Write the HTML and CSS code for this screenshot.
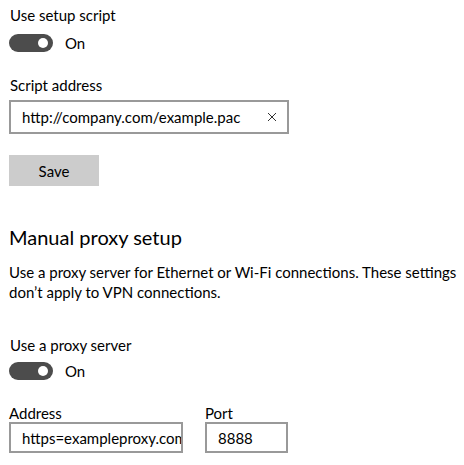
FILE: index.html
```html
<!DOCTYPE html>
<html lang="en">
<head>
<meta charset="UTF-8" />
<meta name="viewport" content="width=device-width, initial-scale=1" />
<title>Proxy</title>
<link rel="stylesheet" href="styles.css">
</head>
<body>

<div class="setting first">
  <div class="label">Use setup script</div>
  <div class="toggle-row">
    <span class="toggle on"><span class="knob"></span></span>
    <span class="state">On</span>
  </div>
</div>

<div class="setting">
  <div class="label">Script address</div>
  <div class="textbox script">
    <span class="value">http://company.com/example.pac</span>
    <svg class="clear" width="10" height="10" viewBox="0 0 10 10">
      <path d="M1 1 L9 9 M9 1 L1 9" stroke="#333" stroke-width="1" fill="none" />
    </svg>
  </div>
  <button class="btn">Save</button>
</div>

<h2>Manual proxy setup</h2>

<p class="desc">Use a proxy server for Ethernet or Wi-Fi connections. These settings don’t apply to VPN connections.</p>

<div class="setting">
  <div class="label">Use a proxy server</div>
  <div class="toggle-row second">
    <span class="toggle on"><span class="knob"></span></span>
    <span class="state">On</span>
  </div>
</div>

<div class="fields">
  <div class="field">
    <div class="field-label">Address</div>
    <div class="textbox address"><span class="value">https=exampleproxy.com</span></div>
  </div>
  <div class="field">
    <div class="field-label">Port</div>
    <div class="textbox port"><span class="value">8888</span></div>
  </div>
</div>

</body>
</html>
```

FILE: styles.css
```css
body {
  margin: 0;
  padding: 5px 9px 0;
  font-family: Lato, "Noto Sans", sans-serif;
  font-size: 15px;
  line-height: 20px;
  color: #000;
  background: #fff;
  overflow: hidden;
}
.label {
  padding-left: 1px;
}
.toggle-row {
  display: flex;
  align-items: center;
  height: 20px;
  margin-top: 8px;
}
.toggle-row.second {
  margin-top: 6px;
}
.toggle {
  width: 44px;
  height: 18px;
  border-radius: 9px;
  background: #4c4c4c;
  display: flex;
  align-items: center;
  justify-content: flex-end;
  box-sizing: border-box;
  padding-right: 5px;
}
.knob {
  width: 10px;
  height: 10px;
  border-radius: 50%;
  background: #fff;
}
.state {
  margin-left: 12px;
}
.setting + .setting {
  margin-top: 22px;
}
.textbox {
  box-sizing: border-box;
  border: 2px solid #999;
  display: flex;
  align-items: center;
  padding: 0 10px 0 11px;
  overflow: hidden;
  white-space: nowrap;
}
.textbox .value {
  flex: 1;
  overflow: hidden;
}
.script {
  width: 280px;
  height: 34px;
  margin-top: 5px;
}
.clear {
  flex-shrink: 0;
  margin-left: 8px;
}
.btn {
  display: block;
  margin-top: 21px;
  width: 90px;
  height: 31px;
  border: none;
  background: #ccc;
  font: inherit;
  color: #000;
  padding: 0;
}
h2 {
  margin: 37px 0 0;
  font-size: 20px;
  line-height: 28px;
  font-weight: normal;
}
.desc {
  margin: 11px 0 0;
  width: 450px;
}
.desc + .setting {
  margin-top: 33px;
}
.fields {
  display: flex;
  gap: 22px;
  margin-top: 23px;
}
.field-label {
  line-height: 18px;
}
.address {
  width: 174px;
  height: 31px;
  padding-right: 0;
}
.port {
  width: 83px;
  height: 31px;
}
```
